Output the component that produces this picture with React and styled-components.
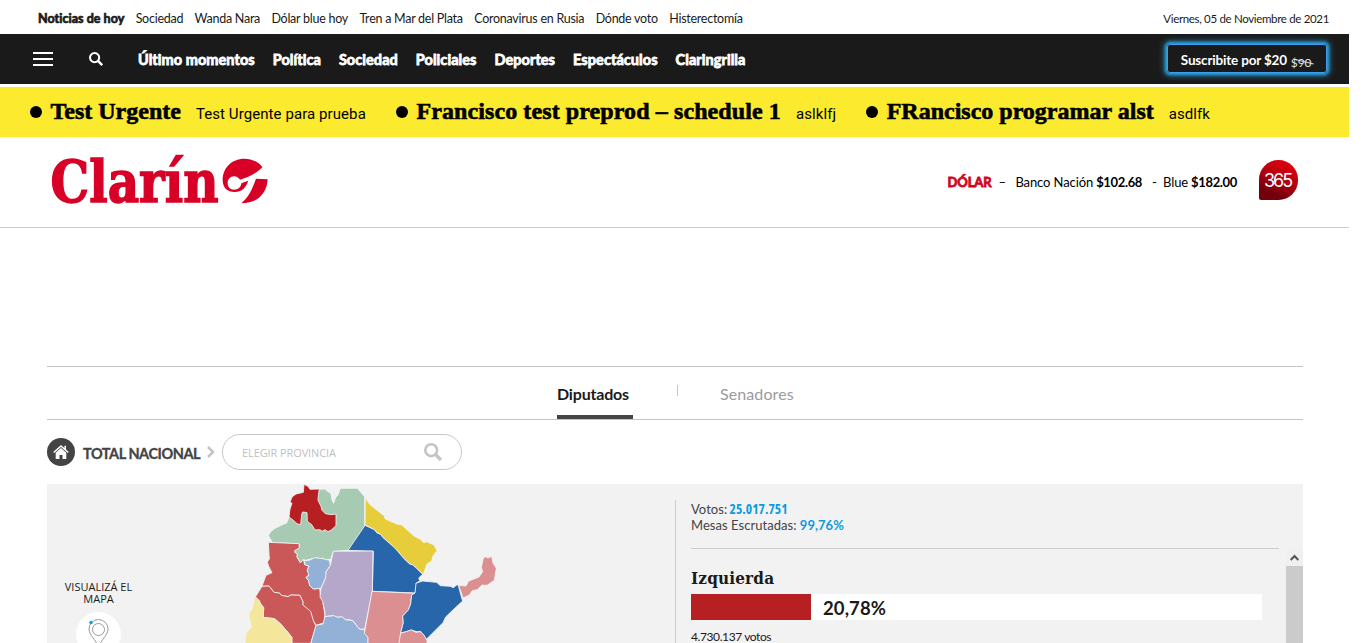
import React from 'react';
import styled, { createGlobalStyle } from 'styled-components';

const sans = 'Lato, "Open Sans", sans-serif';
const openSans = '"Open Sans", "Noto Sans", sans-serif';
const serif = '"Liberation Serif", "Times New Roman", serif';

const GlobalStyle = createGlobalStyle`
  *, *::before, *::after { box-sizing: border-box; }
  html, body { margin: 0; background: #fff; overflow: hidden; }
  body { font-family: ${sans}; color: #1a1a1a; }
  svg { display: block; flex: none; overflow: visible; }
`;

const Page = styled.div`
  width: 1349px;
  height: 643px;
  overflow: hidden;
`;

/* Top strip */
const TopBar = styled.div`
  height: 34px;
  padding: 4px 20px 0 38px;
  display: flex;
  align-items: center;
  justify-content: space-between;
`;
const Topics = styled.nav`
  display: flex;
  gap: 11.4px;
`;
const Topic = styled.a`
  font-size: 12.5px;
  line-height: 18px;
  letter-spacing: -0.26px;
  white-space: nowrap;
`;
const TopicLead = styled(Topic)`
  font-weight: 700;
  letter-spacing: 0.03px;
  -webkit-text-stroke: 0.7px currentColor;
`;
const Today = styled.time`
  font-size: 11.5px;
  line-height: 18px;
  letter-spacing: -0.33px;
  white-space: nowrap;
`;

/* Black navigation */
const NavBar = styled.header`
  height: 50px;
  background: #1a1a1a;
  color: #fff;
  display: flex;
  align-items: center;
  padding: 0 22px 0 33px;
`;
const Burger = styled.button`
  width: 20px;
  height: 14px;
  padding: 0;
  border: 0;
  background: none;
  display: flex;
  flex-direction: column;
  justify-content: space-between;
`;
const BurgerLine = styled.i`
  height: 2px;
  background: #fff;
`;
const NavSearch = styled.div`
  margin: 0 35px 0 36px;
`;
const Sections = styled.nav`
  display: flex;
  gap: 18px;
  flex: 1;
  padding-top: 2px;
`;
const Section = styled.a`
  font-size: 14.5px;
  line-height: 20px;
  font-weight: 700;
  letter-spacing: 0.06px;
  -webkit-text-stroke: 0.8px currentColor;
  white-space: nowrap;
`;
const Subscribe = styled.a`
  width: 160px;
  height: 29px;
  margin-bottom: 1px;
  border: 1px solid #3b9df5;
  border-radius: 3px;
  box-shadow: 0 0 3px 2px #2b9fd6, 0 0 6px 3px rgba(43, 159, 214, 0.6);
  display: flex;
  align-items: center;
  justify-content: center;
  gap: 4px;
  padding: 3px 2px 0 0;
  font-size: 13.5px;
  font-weight: 700;
  letter-spacing: -0.18px;
  white-space: nowrap;
`;
const OldPrice = styled.span`
  position: relative;
  top: 2px;
  font-size: 12px;
  font-weight: 400;
  color: #e4e4e4;
  &::after {
    content: '';
    position: absolute;
    left: 2px;
    right: -3px;
    top: 6px;
    height: 1px;
    background: #ddd;
    transform: rotate(14deg);
  }
`;

/* Urgent ticker */
const Ticker = styled.div`
  margin-top: 3px;
  height: 50px;
  background: #fcea2f;
  color: #000;
  display: flex;
  align-items: center;
  gap: 30px;
  padding: 0 0 2px 30px;
`;
const TickerItem = styled.a`
  display: flex;
  align-items: baseline;
  white-space: nowrap;
`;
const Dot = styled.i`
  width: 12px;
  height: 12px;
  border-radius: 50%;
  background: #000;
  margin-right: 8.5px;
  position: relative;
  top: -1px;
`;
const Headline = styled.strong`
  font-family: ${serif};
  font-size: 24px;
  line-height: 30px;
  letter-spacing: ${p => p.$track || 0}px;
  -webkit-text-stroke: 0.6px #000;
  margin-right: 15px;
`;
const Summary = styled.span`
  font-family: Roboto, sans-serif;
  font-size: 15px;
  letter-spacing: 0.08px;
`;

/* Masthead */
const Masthead = styled.div`
  height: 91px;
  border-bottom: 1px solid #ccc;
  display: flex;
  align-items: center;
  justify-content: space-between;
  padding: 0 51px 0 50px;
`;
const Rates = styled.div`
  display: flex;
  align-items: center;
  color: #000;
  font-size: 13px;
  line-height: 20px;
  letter-spacing: -0.1px;
  white-space: pre;
`;
const DollarLabel = styled.b`
  color: #cf0722;
  letter-spacing: -0.15px;
  -webkit-text-stroke: 0.8px currentColor;
`;
const Dash = styled.span`
  width: ${p => p.$width}px;
  padding-left: ${p => p.$indent}px;
`;
const Rate = styled.span`
  b { letter-spacing: -0.35px; margin-left: 3px; }
`;
const Badge365 = styled.div`
  width: 39px;
  height: 40px;
  margin-left: 22px;
  margin-bottom: 4px;
  border-radius: 20px 20px 20px 2px;
  background: linear-gradient(205deg, #e2000f 10%, #b5000f 45%, #74000d 78%);
  color: #fff;
  display: flex;
  align-items: center;
  justify-content: center;
  padding-top: 1px;
  font-family: Inter, sans-serif;
  font-size: 18px;
  letter-spacing: -2px;
  text-indent: -2px;
`;

/* Results */
const Results = styled.main`
  margin: 138px 46px 0 47px;
`;
const Tabs = styled.div`
  height: 54px;
  border-top: 1px solid #c4c4c4;
  border-bottom: 1px solid #c4c4c4;
  display: flex;
  padding-left: 510px;
`;
const Tab = styled.button`
  width: ${p => (p.$active ? 76 : 80)}px;
  padding: 5px 0 0;
  border: 0;
  border-bottom: 4px solid ${p => (p.$active ? '#444' : 'transparent')};
  background: none;
  text-align: left;
  font-family: ${sans};
  font-size: 16px;
  font-weight: ${p => (p.$active ? 700 : 400)};
  letter-spacing: ${p => (p.$active ? -0.18 : 0.1)}px;
  color: ${p => (p.$active ? '#1a1a1a' : '#9b9b9b')};
`;
const TabDivider = styled.i`
  width: 1px;
  height: 11px;
  margin: 18px 42px 0 44px;
  background: #c4c4c4;
`;
const Crumbs = styled.div`
  height: 64px;
  display: flex;
  align-items: center;
`;
const HomeButton = styled.div`
  width: 28px;
  height: 28px;
  border-radius: 50%;
  background: #444;
  display: flex;
  align-items: center;
  justify-content: center;
`;
const CrumbTitle = styled.h1`
  margin: 3px 6px 0 8px;
  width: 118px;
  font-size: 14.5px;
  font-weight: 700;
  letter-spacing: -0.45px;
  -webkit-text-stroke: 0.3px currentColor;
  color: #444;
  white-space: nowrap;
`;
const ProvinceField = styled.div`
  width: 240px;
  height: 36px;
  margin-left: 7px;
  border: 1px solid #c8c8c8;
  border-radius: 18px;
  display: flex;
  align-items: center;
  justify-content: space-between;
  padding: 1px 19px 0 19px;
  font-family: ${openSans};
  font-size: 11px;
  letter-spacing: -0.1px;
  color: #c0c0c0;
  svg { margin-top: -1px; }
`;
const Panel = styled.section`
  height: 400px;
  background: #f2f2f2;
  display: flex;
`;
const MapSwitch = styled.div`
  width: 103px;
  padding-top: 97px;
  display: flex;
  flex-direction: column;
  align-items: center;
  font-family: ${openSans};
  font-size: 11px;
  line-height: 12px;
`;
const SwitchLine = styled.span`
  height: 12px;
`;
const PinCircle = styled.div`
  width: 45px;
  height: 45px;
  margin-top: 7px;
  border-radius: 50%;
  background: #fff;
  display: flex;
  justify-content: center;
  padding-top: 7px;
`;
const MapArea = styled.div`
  width: 525px;
  padding-left: 70px;
  svg { overflow: hidden; }
`;
const Tally = styled.div`
  flex: 1;
  min-width: 0;
  margin-top: 16px;
  border-left: 1px solid #ccc;
`;
const Totals = styled.div`
  height: 49px;
  width: 588px;
  margin-left: 15px;
  padding-top: 1px;
  border-bottom: 1px solid #ccc;
  font-size: 13px;
  line-height: 16px;
  color: #444;
`;
const Total = styled.div`
  height: 16px;
  letter-spacing: 0.04px;
  b { color: #0a9cdc; }
`;
const VotesTotal = styled.b`
  font-family: ${openSans};
  font-stretch: 75%;
  font-size: 13.5px;
  line-height: 14px;
  letter-spacing: 0.04px;
  margin-left: -1px;
`;
const Scroller = styled.div`
  display: flex;
  justify-content: space-between;
  padding-left: 15px;
`;
const Party = styled.article`
  width: 571px;
  padding-top: 15px;
`;
const PartyName = styled.h2`
  margin: 0;
  font-family: "DejaVu Serif Condensed", "DejaVu Serif", serif;
  font-size: 17px;
  line-height: 28px;
  font-weight: 700;
  letter-spacing: 0.15px;
`;
const Bar = styled.div`
  height: 26px;
  margin-top: 2px;
  background: #fff;
  display: flex;
  align-items: center;
`;
const Fill = styled.div`
  width: 120px;
  height: 100%;
  background: #b62022;
  margin-right: 12px;
`;
const Percent = styled.b`
  padding-top: 2px;
  font-size: 18.5px;
  letter-spacing: 0.1px;
`;
const VoteCount = styled.div`
  margin-top: 8px;
  font-size: 12px;
  line-height: 18px;
  letter-spacing: -0.4px;
`;
const ScrollTrack = styled.div`
  width: 17px;
  height: 340px;
  display: flex;
  flex-direction: column;
`;
const ScrollUp = styled.div`
  height: 17px;
  background: #f0f0f0;
  display: flex;
  align-items: center;
  justify-content: center;
`;
const Thumb = styled.div`
  flex: 1;
  background: #cbcbcb;
`;

const topics = ['Sociedad', 'Wanda Nara', 'Dólar blue hoy', 'Tren a Mar del Plata', 'Coronavirus en Rusia', 'Dónde voto', 'Histerectomía'];
const sections = ['Último momentos', 'Política', 'Sociedad', 'Policiales', 'Deportes', 'Espectáculos', 'Claringrilla'];
const urgent = [
  { title: 'Test Urgente', text: 'Test Urgente para prueba' },
  { title: 'Francisco test preprod – schedule 1', text: 'aslklfj', track: 0.1 },
  { title: 'FRancisco programar alst', text: 'asdlfk' },
];

const provinces = [
  { name: 'Salta', color: '#a6cbb2', d: 'M300 28L315 27 325 36 332 38 336 60 341 70 347 52 354 45 361 25H412L434 50V150L384 211 340 214 332 238 316 240 308 234 300 238 290 233 280 235 268 238 256 241 250 238 241 249 230 230 232 222 224 217 225 211 237 204 238 192 157 187 145 167 152 155 165 145 190 133 200 129 208 110Z' },
  { name: 'Jujuy', color: '#b62022', d: 'M252 13L264 19 270 28 298 27 295 46 294 61 303 79 306 91 316 101 334 104 348 102V137L334 150 324 155 315 149 306 154 300 149 285 150 275 134 262 124 261 98 248 96 245 103 242 134 231 131 219 120 207 111 210 87 216 70 210 67 216 51 228 42 250 37Z' },
  { name: 'Formosa', color: '#e7cd39', d: 'M436 52L448 72 456 79 492 107 496 117 530 132 545 135 582 168 601 178 611 188 620 185 642 195 651 212 639 228 635 243 621 252 610 283 588 263 577 254 569 252 552 236 530 210 519 199 488 172 483 164 470 158 463 149 435 134Z' },
  { name: 'Chaco', color: '#2866ab', d: 'M435 136L463 149 470 158 483 164 488 172 519 199 530 210 552 236 569 252 577 254 588 263 608 283 596 294 600 302 588 310 591 319 587 324 586 339 457 334 460 214 384 211Z' },
  { name: 'Catamarca', color: '#ca5858', d: 'M145 187L237 191 238 204 225 211 224 217 232 222 230 230 241 249 250 238 254 254 266 258 262 272 268 282 258 293 266 301 269 316 280 327 299 325 301 345 311 359 309 370 315 404 312 428 289 436 279 422 272 400 260 386 248 374 249 366 240 346 213 345 204 350 184 346 178 339 162 337 147 318 126 319 138 286 156 278 146 259 142 246 148 237Z' },
  { name: 'Tucumán', color: '#93b1d7', d: 'M254 242L268 241 284 233 308 236 328 241 331 256 318 276 319 288 303 325 280 327 269 316 265 300 258 293 267 286 262 272 267 258 255 254Z' },
  { name: 'Santiago del Estero', color: '#b5a7ca', d: 'M340 214L459 213 457 334 434 447 419 448 398 421 374 418 368 411 350 411 337 407 315 410 315 398 308 364 300 351 303 326 317 293 318 276 331 256Z' },
  { name: 'La Rioja', color: '#ca5858', d: 'M126 319L147 318 162 337 178 339 184 346 204 350 213 345 240 346 249 366 248 374 272 394 280 422 288 438 272 490H216V472L202 455 180 430 164 416 130 412 131 383 106 351Z' },
  { name: 'San Juan', color: '#f4e69b', d: 'M105 350L118 361 122 372 131 383 130 412 160 416 184 434 202 455 215 473V500H74L78 460 94 442 86 402 97 385Z' },
  { name: 'Córdoba', color: '#93b1d7', d: 'M288 436L309 432 315 410 342 407 352 412 367 411 376 419 398 422 419 448 433 449 436 461 444 472V500H270Z' },
  { name: 'Santa Fe', color: '#dc8f91', d: 'M456 334L586 340 575 345 572 372 565 390 548 408 550 428 543 455 540 476V500H444V472L433 460Z' },
  { name: 'Corrientes', color: '#2866ab', d: 'M588 310L607 303 650 307 661 317 691 319 700 323 711 314 715 316 724 350 728 363 705 384 677 411 669 428 619 478 602 454 590 455 574 450 556 456 542 458 550 428 548 408 565 390 572 372 575 345 585 339Z' },
  { name: 'Entre Ríos', color: '#dc8f91', d: 'M542 459L556 456 574 450 588 457 601 455 612 465 621 482V500H535Z' },
  { name: 'Misiones', color: '#dc8f91', d: 'M716 316L738 318 746 303 777 291 788 275 784 263 790 234 797 230 804 234 815 229 819 249 829 265 823 301 801 316 786 315 772 329 757 332 748 345 729 354Z' },
];

const MagnifierIcon = ({ size, color }) => (
  <svg width={size} height={size} viewBox="0 0 18 18" fill="none" stroke={color}>
    <circle cx="7.2" cy="7.2" r="5.9" strokeWidth="2.6" />
    <path d="M11.5 11.5L17 17" strokeWidth="3.2" />
  </svg>
);

const ClarinLogo = () => (
  <svg width="220" height="54" viewBox="0 0 220 54" fill="#d80027">
    <text x="0.5" y="47" fontFamily="DejaVu Serif Condensed, DejaVu Serif, serif" fontWeight="700" fontSize="58" stroke="#d80027" strokeWidth="1.4" textLength="168" lengthAdjust="spacingAndGlyphs">Clarín</text>
    <g transform="translate(-20 -15) scale(.33333)">
      <path d="M697 82C685 65 665 56 643 56C605 56 578 84 578 120C578 143 592 156 614 156C636 156 648 142 655 122L634 130C633 142 624 149 612 149C600 149 593 140 593 129C593 118 601 109 612 109C620 109 626 113 630 119C655 112 680 100 697 82Z" />
      <path d="M678 116L713 118C711 160 683 190 634 190C652 174 662 158 672 132Z" />
    </g>
  </svg>
);

const HomeIcon = () => (
  <svg width="16" height="16" viewBox="0 0 16 16">
    <path d="M.7 8.500L8 2l7.300 6.500M12.200 5.500V1.800" fill="none" stroke="#fff" strokeWidth="1.600" />
    <path d="M2.700 8.700L8 4l5.300 4.700V15H9.500v-4h-3v4H2.700Z" fill="#fff" />
  </svg>
);

const PinIcon = () => (
  <svg width="21" height="30" viewBox="0 0 21 30" fill="none" stroke="#999">
    <path d="M10.500 28C8 21 1 16 1 10a9.500 9.500 0 0 1 19 0c0 6-7 11-9.500 18Z" />
    <circle cx="10.500" cy="10.500" r="6" />
    <circle cx="3" cy="3.500" r="1.700" fill="#0a9cf0" stroke="none" />
  </svg>
);

export default function App() {
  return (
    <Page>
      <GlobalStyle />
      <TopBar>
        <Topics>
          <TopicLead>Noticias de hoy</TopicLead>
          {topics.map(t => <Topic key={t}>{t}</Topic>)}
        </Topics>
        <Today>Viernes, 05 de Noviembre de 2021</Today>
      </TopBar>
      <NavBar>
        <Burger aria-label="Menú"><BurgerLine /><BurgerLine /><BurgerLine /></Burger>
        <NavSearch><MagnifierIcon size={14} color="#fff" /></NavSearch>
        <Sections>{sections.map(s => <Section key={s}>{s}</Section>)}</Sections>
        <Subscribe>Suscribite por $20 <OldPrice>$90</OldPrice></Subscribe>
      </NavBar>
      <Ticker>
        {urgent.map(u => (
          <TickerItem key={u.title}>
            <Dot />
            <Headline $track={u.track}>{u.title}</Headline>
            <Summary>{u.text}</Summary>
          </TickerItem>
        ))}
      </Ticker>
      <Masthead>
        <ClarinLogo />
        <Rates>
          <DollarLabel>DÓLAR</DollarLabel>
          <Dash $width={24} $indent={7}>–</Dash>
          <Rate>Banco Nación<b>$102.68</b></Rate>
          <Dash $width={21} $indent={10}>-</Dash>
          <Rate>Blue<b>$182.00</b></Rate>
          <Badge365>365</Badge365>
        </Rates>
      </Masthead>
      <Results>
        <Tabs>
          <Tab $active>Diputados</Tab>
          <TabDivider />
          <Tab>Senadores</Tab>
        </Tabs>
        <Crumbs>
          <HomeButton><HomeIcon /></HomeButton>
          <CrumbTitle>TOTAL NACIONAL</CrumbTitle>
          <svg width="8" height="12" viewBox="0 0 8 12" fill="none" stroke="#c4c4c4" strokeWidth="2.500"><path d="M1 1l5 5-5 5" /></svg>
          <ProvinceField>ELEGIR PROVINCIA<MagnifierIcon size={18} color="#c4c4c4" /></ProvinceField>
        </Crumbs>
        <Panel>
          <MapSwitch>
            <SwitchLine>VISUALIZÁ EL</SwitchLine>
            <SwitchLine>MAPA</SwitchLine>
            <PinCircle><PinIcon /></PinCircle>
          </MapSwitch>
          <MapArea>
            <svg width="300" height="159" viewBox="0 12 900 477" stroke="#f2f2f2" strokeWidth="2.600" strokeLinejoin="round">
              {provinces.map(p => <path key={p.name} d={p.d} fill={p.color} />)}
            </svg>
          </MapArea>
          <Tally>
            <Totals>
              <Total>Votos: <VotesTotal>25.017.751</VotesTotal></Total>
              <Total>Mesas Escrutadas: <b>99,76%</b></Total>
            </Totals>
            <Scroller>
              <Party>
                <PartyName>Izquierda</PartyName>
                <Bar><Fill /><Percent>20,78%</Percent></Bar>
                <VoteCount>4.730.137 votos</VoteCount>
              </Party>
              <ScrollTrack>
                <ScrollUp>
                  <svg width="9" height="7" viewBox="0 0 9 7" fill="none" stroke="#555" strokeWidth="2"><path d="M.7 6L4.500 2 8.300 6" /></svg>
                </ScrollUp>
                <Thumb />
              </ScrollTrack>
            </Scroller>
          </Tally>
        </Panel>
      </Results>
    </Page>
  );
}
